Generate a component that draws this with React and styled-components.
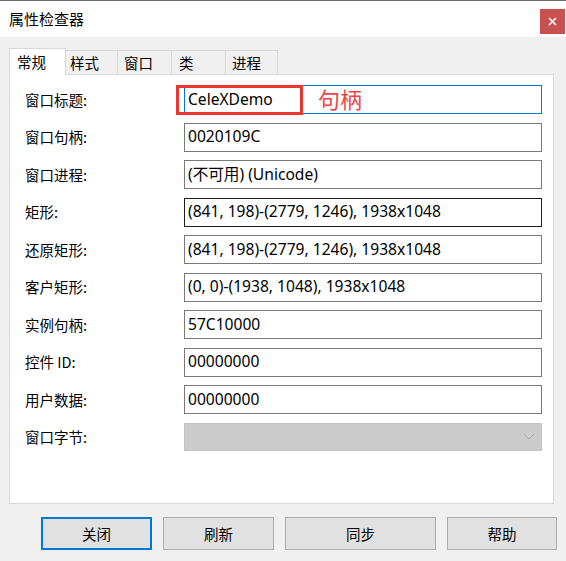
import React from "react";
import styled, { createGlobalStyle } from "styled-components";

const Global = createGlobalStyle`
  html, body { margin: 0; padding: 0; background: #f0f0f0; }
  body { font-family: "Noto Sans", "Noto Sans CJK SC", sans-serif; color: #000; }
  * { box-sizing: border-box; }
`;

const Window = styled.div`
  width: 566px;
  height: 561px;
  background: #f0f0f0;
  border-top: 1px solid #707070;
  display: flex;
  flex-direction: column;
  overflow: hidden;
`;

const TitleBar = styled.div`
  height: 36px;
  background: #fff;
  display: flex;
  align-items: center;
  justify-content: space-between;
  padding-left: 9px;
  padding-right: 1px;
`;

const Title = styled.div`
  font-family: "Noto Sans CJK SC", sans-serif;
  font-size: 15px;
  line-height: 20px;
`;

const Close = styled.div`
  width: 25px;
  height: 25px;
  background: #c75050;
  display: flex;
  align-items: center;
  justify-content: center;
  align-self: flex-start;
  margin-top: 8px;
`;

const Body = styled.div`
  padding: 11px 12px 0 9px;
  display: flex;
  flex-direction: column;
`;

const TabStrip = styled.div`
  display: flex;
  align-items: flex-end;
  height: 26px;
  position: relative;
  z-index: 1;
`;

const Tab = styled.div`
  width: ${(p) => p.$w}px;
  flex-shrink: 0;
  height: ${(p) => (p.$active ? 27 : 24)}px;
  margin-bottom: ${(p) => (p.$active ? -1 : 0)}px;
  background: ${(p) => (p.$active ? "#fff" : "#f0f0f0")};
  border: 1px solid #d9d9d9;
  border-bottom: none;
  border-left: ${(p) => (p.$first ? "1px solid #d9d9d9" : "none")};
  padding-left: ${(p) => p.$pl}px;
  font-family: "Noto Sans CJK SC", sans-serif;
  font-size: 14.5px;
  line-height: ${(p) => (p.$active ? 26 : 24)}px;
`;

const Panel = styled.div`
  height: 430px;
  background: #fff;
  border: 1px solid #d9d9d9;
  padding: 10px 11px 0 14px;
  display: grid;
  grid-template-columns: 160px 1fr;
  grid-auto-rows: 29px;
  row-gap: 8.5px;
  align-content: start;
  position: relative;
`;

const Label = styled.div`
  font-family: "Noto Sans CJK SC", sans-serif;
  font-size: 14.5px;
  display: flex;
  align-items: center;
  padding-left: 1px;
  padding-bottom: 1px;
`;

const borderColors = { normal: "#7a7a7a", focus: "#0078d7", hover: "#1e1e1e" };

const Field = styled.div`
  border: 1px solid ${(p) => borderColors[p.$state || "normal"]};
  background: #fff;
  display: flex;
  align-items: center;
  padding-left: 3px;
  padding-bottom: 2px;
  font-family: "Noto Sans", "Noto Sans CJK SC", sans-serif;
  font-size: 15.6px;
  white-space: nowrap;
  overflow: hidden;
`;

const Combo = styled.div`
  height: 28px;
  background: #cccccc;
  border: 1px solid #c4c4c4;
  display: flex;
  align-items: center;
  justify-content: flex-end;
  padding-right: 6px;
`;

const Highlight = styled.div`
  position: absolute;
  left: 166px;
  top: 10px;
  width: 127px;
  height: 30px;
  border: 3px solid #ee3535;
`;

const Note = styled.div`
  position: absolute;
  left: 308px;
  top: 8px;
  font-family: "Noto Sans CJK SC", sans-serif;
  font-size: 22px;
  line-height: 30px;
  color: #f04545;
`;

const ButtonRow = styled.div`
  display: flex;
  gap: 11px;
  padding-left: 32px;
  margin-top: 13px;
`;

const Button = styled.div`
  width: ${(p) => p.$w}px;
  flex-shrink: 0;
  height: 33px;
  background: #e1e1e1;
  border: ${(p) => (p.$default ? "2px solid #0078d7" : "1px solid #adadad")};
  display: flex;
  align-items: center;
  justify-content: center;
  font-family: "Noto Sans CJK SC", sans-serif;
  font-size: 14.5px;
`;

const tabs = [
  { t: "常规", w: 57, pl: 7 },
  { t: "样式", w: 52, pl: 4 },
  { t: "窗口", w: 54, pl: 6 },
  { t: "类", w: 54, pl: 7 },
  { t: "进程", w: 52, pl: 6 },
];

const rows = [
  ["窗口标题:", "CeleXDemo", "focus"],
  ["窗口句柄:", "0020109C"],
  ["窗口进程:", "(不可用) (Unicode)"],
  ["矩形:", "(841, 198)-(2779, 1246), 1938x1048", "hover"],
  ["还原矩形:", "(841, 198)-(2779, 1246), 1938x1048"],
  ["客户矩形:", "(0, 0)-(1938, 1048), 1938x1048"],
  ["实例句柄:", "57C10000"],
  ["控件 ID:", "00000000"],
  ["用户数据:", "00000000"],
];

export default function App() {
  return (
    <>
      <Global />
      <Window>
        <TitleBar>
          <Title>属性检查器</Title>
          <Close>
            <svg width="9" height="9" viewBox="0 0 9 9">
              <path d="M1 1L8 8M8 1L1 8" stroke="#fff" strokeWidth="1.6" />
            </svg>
          </Close>
        </TitleBar>
        <Body>
          <TabStrip>
            {tabs.map((t, i) => (
              <Tab key={t.t} $w={t.w} $pl={t.pl} $active={i === 0} $first={i === 0}>
                {t.t}
              </Tab>
            ))}
          </TabStrip>
          <Panel>
            {rows.map(([l, v, s]) => (
              <React.Fragment key={l}>
                <Label>{l}</Label>
                <Field $state={s}>{v}</Field>
              </React.Fragment>
            ))}
            <Label>窗口字节:</Label>
            <Combo>
              <svg width="12" height="7" viewBox="0 0 12 7">
                <path d="M1 1L6 6L11 1" fill="none" stroke="#a8a8a8" strokeWidth="1" />
              </svg>
            </Combo>
            <Highlight />
            <Note>句柄</Note>
          </Panel>
          <ButtonRow>
            <Button $w={111} $default>关闭</Button>
            <Button $w={111}>刷新</Button>
            <Button $w={151}>同步</Button>
            <Button $w={110}>帮助</Button>
          </ButtonRow>
        </Body>
      </Window>
    </>
  );
}
